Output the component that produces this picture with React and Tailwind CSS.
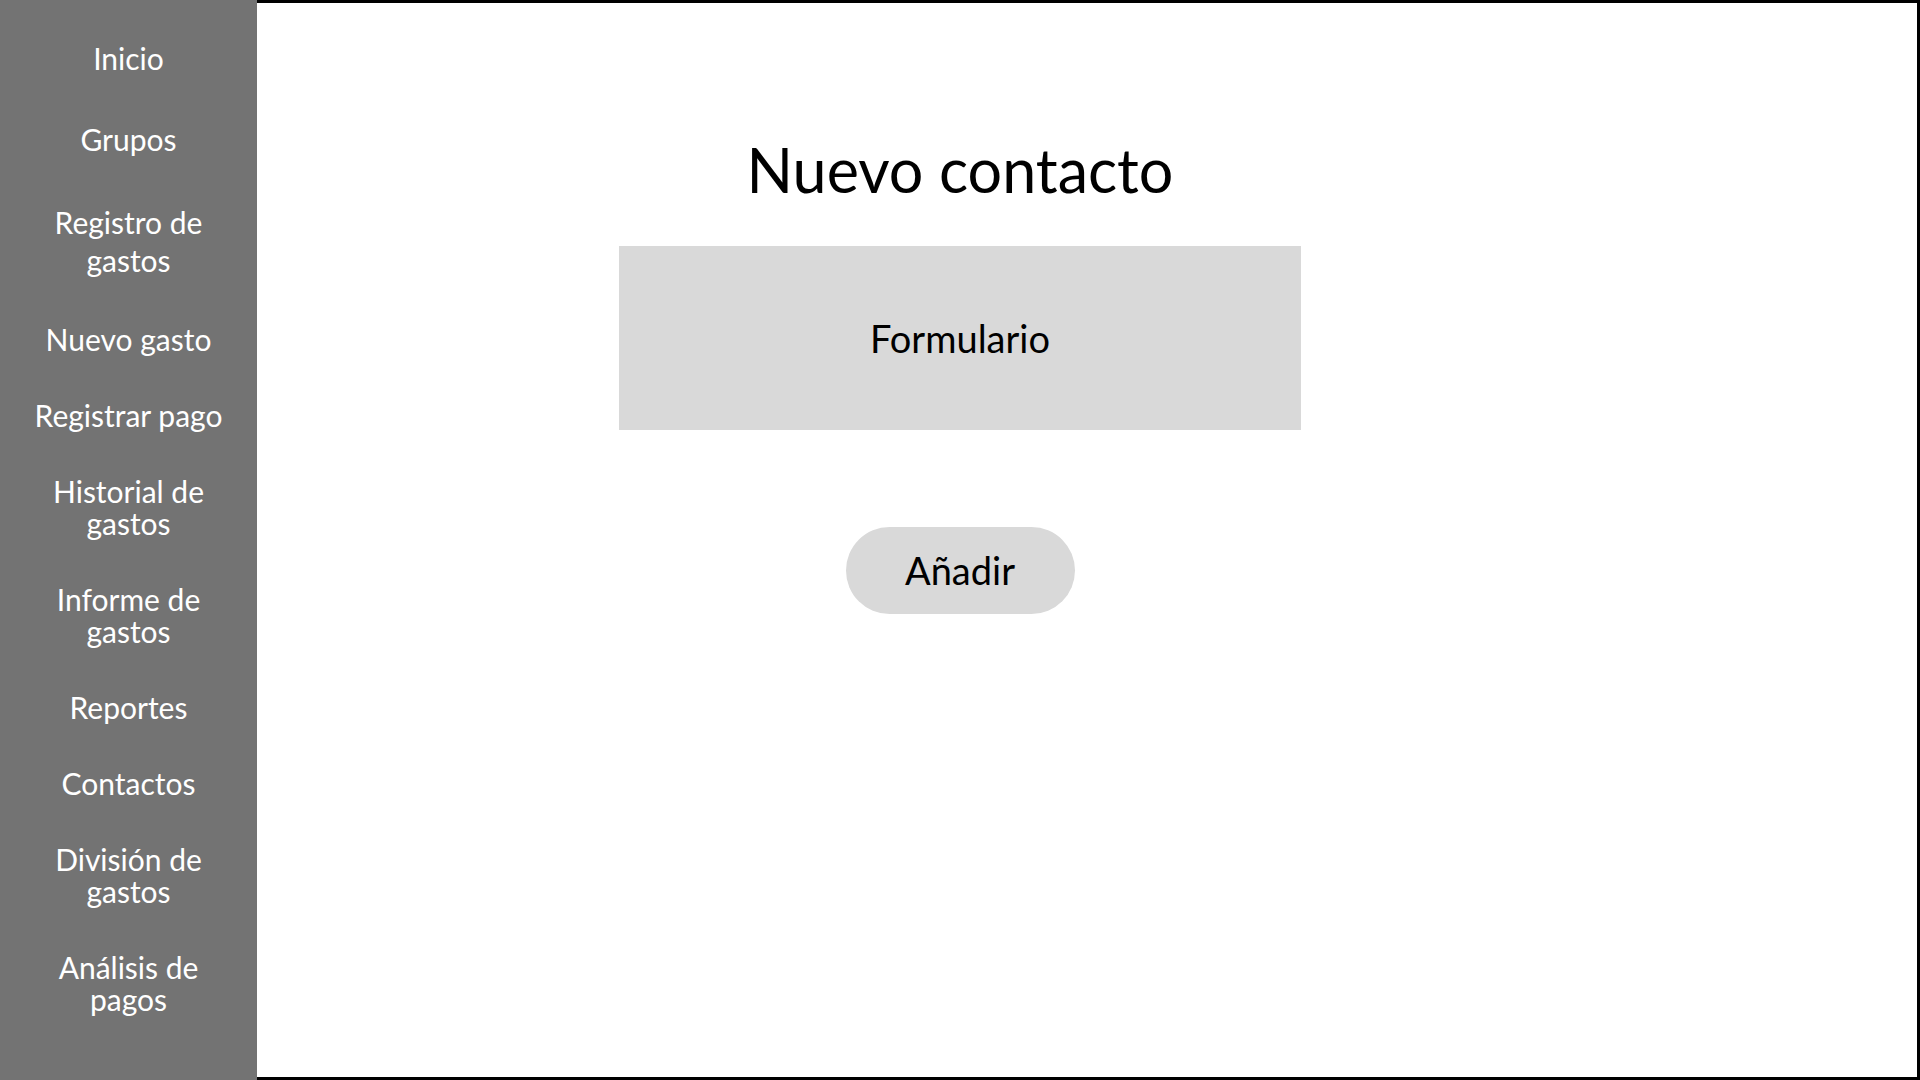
const menu = [
  { label: ["Inicio"], mt: "mt-[42px]" },
  { label: ["Grupos"], mt: "mt-[49px]" },
  { label: ["Registro de", "gastos"], mt: "mt-[48px]", tall: true },
  { label: ["Nuevo gasto"], mt: "mt-[44px]" },
  { label: ["Registrar pago"], mt: "mt-[44px]" },
  { label: ["Historial de", "gastos"], mt: "mt-[44px]" },
  { label: ["Informe de", "gastos"], mt: "mt-[44px]" },
  { label: ["Reportes"], mt: "mt-[44px]" },
  { label: ["Contactos"], mt: "mt-[44px]" },
  { label: ["División de", "gastos"], mt: "mt-[44px]" },
  { label: ["Análisis de", "pagos"], mt: "mt-[44px]" },
];

const App = () => {
  return (
    <div
      className="flex h-screen w-full bg-white"
      style={{ fontFamily: "Lato, 'Open Sans', sans-serif" }}
    >
      {/* sidebar */}
      <div className="flex w-[257px] shrink-0 flex-col items-center bg-[#737373] text-white">
        {menu.map((item) => (
          <div
            key={item.label.join(" ")}
            className={`${item.mt} text-center text-[30px] ${
              item.tall ? "leading-[38px]" : "leading-[32px]"
            }`}
          >
            {item.label.map((line) => (
              <div key={line}>{line}</div>
            ))}
          </div>
        ))}
      </div>

      {/* main */}
      <div className="flex flex-1 flex-col items-center border-t-[3px] border-r-[3px] border-b-[3px] border-black pr-[254px]">
        <h1 className="mt-[136px] text-[61px] leading-none text-black">
          Nuevo contacto
        </h1>
        <div className="mt-[46px] flex h-[184px] w-[682px] items-center justify-center bg-[#d9d9d9] text-[38px] text-black">
          Formulario
        </div>
        <button className="mt-[97px] flex h-[87px] w-[229px] items-center justify-center rounded-full bg-[#d9d9d9] text-[38px] text-black">
          Añadir
        </button>
      </div>
    </div>
  );
};

export default App;
